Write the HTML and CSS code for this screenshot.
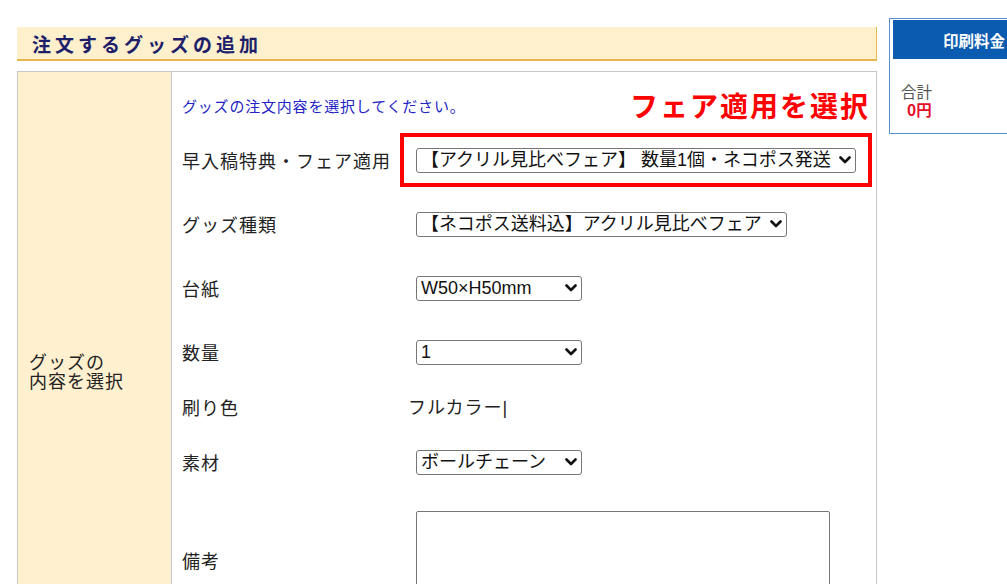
FILE: index.html
```html
<!DOCTYPE html>
<html lang="ja">
<head>
<meta charset="utf-8">
<title>注文するグッズの追加</title>
<link rel="stylesheet" href="styles.css">
</head>
<body>
<div class="page">
  <main class="main">
    <div class="section-head">
      <h2 class="section-title">注文するグッズの追加</h2>
    </div>
    <div class="order-table">
      <div class="side-cell">
        <p class="side-label">グッズの<br>内容を選択</p>
      </div>
      <div class="form-cell">
        <div class="intro">
          <p class="intro-text">グッズの注文内容を選択してください。</p>
          <p class="callout">フェア適用を選択</p>
        </div>
        <div class="form-row">
          <span class="label">早入稿特典・フェア適用</span>
          <div class="value">
            <select class="sel sel-wide">
              <option>【アクリル見比べフェア】 数量1個・ネコポス発送</option>
            </select>
          </div>
          <div class="highlight-box"></div>
        </div>
        <div class="form-row">
          <span class="label">グッズ種類</span>
          <div class="value">
            <select class="sel sel-mid">
              <option>【ネコポス送料込】アクリル見比べフェア</option>
            </select>
          </div>
        </div>
        <div class="form-row">
          <span class="label">台紙</span>
          <div class="value">
            <select class="sel sel-narrow">
              <option>W50×H50mm</option>
            </select>
          </div>
        </div>
        <div class="form-row">
          <span class="label">数量</span>
          <div class="value">
            <select class="sel sel-narrow">
              <option>1</option>
            </select>
          </div>
        </div>
        <div class="form-row form-row-text">
          <span class="label">刷り色</span>
          <div class="value"><span class="plain-value">フルカラー<span class="bar">|</span></span></div>
        </div>
        <div class="form-row">
          <span class="label">素材</span>
          <div class="value">
            <select class="sel sel-narrow">
              <option>ボールチェーン</option>
            </select>
          </div>
        </div>
        <div class="form-row form-row-note">
          <span class="label">備考</span>
          <div class="value">
            <textarea class="note"></textarea>
          </div>
        </div>
      </div>
    </div>
  </main>
  <aside class="price-panel">
    <div class="price-head">印刷料金</div>
    <div class="price-body">
      <p class="total-label">合計</p>
      <p class="total-value">0円</p>
    </div>
  </aside>
</div>
</body>
</html>
```

FILE: styles.css
```css
html, body {
  margin: 0;
  padding: 0;
  overflow: hidden;
  background: #ffffff;
}

body {
  font-family: "Noto Sans CJK JP", "Noto Sans", sans-serif;
  color: #222;
}

p, h2 {
  margin: 0;
}

.page {
  display: flex;
  align-items: flex-start;
  gap: 12px;
  padding: 18px 0 0 17px;
  width: 1200px;
}

.main {
  width: 860px;
  flex: none;
  padding-top: 9px;
}

.section-head {
  height: 32px;
  background: #fff0cd;
  border-bottom: 2px solid #e7b64e;
  border-right: 1px solid #e7b64e;
  display: flex;
  align-items: center;
  padding-left: 15px;
}

.section-title {
  font-size: 19px;
  font-weight: bold;
  letter-spacing: 4px;
  color: #1d1f6a;
  line-height: 1;
}

.order-table {
  margin-top: 10px;
  display: flex;
  border: 1px solid #c6c6c6;
  border-bottom: none;
  min-height: 540px;
}

.side-cell {
  width: 154px;
  flex: none;
  background: #fff0cf;
  border-right: 1px solid #c6c6c6;
  padding: 280px 0 0 11px;
  box-sizing: border-box;
}

.side-label {
  font-size: 18px;
  line-height: 19px;
  letter-spacing: 1px;
  color: #222;
}

.form-cell {
  flex: 1;
  padding-left: 10px;
}

.intro {
  display: flex;
  align-items: center;
  justify-content: space-between;
  height: 34px;
  padding: 16px 6px 6px 0;
}

.intro-text {
  font-size: 15px;
  letter-spacing: 0.8px;
  color: #2424c4;
}

.callout {
  font-size: 28px;
  font-weight: bold;
  letter-spacing: 2px;
  color: #ff0000;
  line-height: 34px;
}

.form-row {
  position: relative;
  display: flex;
  align-items: center;
  height: 64px;
}

.form-row-text {
  height: 46px;
}

.form-row-note {
  height: auto;
  padding-top: 17px;
}

.label {
  width: 226px;
  flex: none;
  font-size: 18px;
  letter-spacing: 1px;
  line-height: 24px;
  color: #222;
}

.value {
  display: flex;
  align-items: center;
}

.sel {
  -webkit-appearance: none;
  appearance: none;
  margin-left: 8px;
  height: 25px;
  font-family: "Liberation Sans", "Noto Sans CJK JP", sans-serif;
  font-size: 18px;
  line-height: 23px;
  color: #111;
  background-color: #fff;
  background-image: url("data:image/svg+xml,%3Csvg xmlns='http://www.w3.org/2000/svg' width='12' height='8' viewBox='0 0 12 8'%3E%3Cpath d='M1.5 1.5 L6 6 L10.5 1.5' fill='none' stroke='%23111' stroke-width='2.6' stroke-linecap='round' stroke-linejoin='round'/%3E%3C/svg%3E");
  background-repeat: no-repeat;
  background-position: right 4px center;
  background-size: 12px 8px;
  border: 1px solid #767676;
  border-radius: 3px;
  padding: 0 18px 0 4px;
  box-sizing: border-box;
}

.sel-wide {
  width: 440px;
}

.sel-mid {
  width: 371px;
}

.sel-narrow {
  width: 166px;
}

.plain-value {
  font-size: 18px;
  letter-spacing: 1px;
  line-height: 24px;
  color: #222;
}

.bar {
  font-family: "Liberation Sans", sans-serif;
  font-weight: normal;
}

.note {
  margin-left: 8px;
  width: 414px;
  height: 98px;
  box-sizing: border-box;
  border: 1px solid #767676;
  border-radius: 2px;
  resize: none;
}

.highlight-box {
  position: absolute;
  left: 218px;
  top: 5px;
  width: 472px;
  height: 54px;
  box-sizing: border-box;
  border: 4px solid #ff0000;
  pointer-events: none;
}

.price-panel {
  width: 170px;
  flex: none;
  border: 1px solid #5a90c8;
  padding: 1px 0 0 3px;
  box-sizing: border-box;
}

.price-head {
  height: 39px;
  background: #0b5cb0;
  color: #ffffff;
  font-size: 15.5px;
  font-weight: bold;
  display: flex;
  align-items: center;
  padding-left: 50px;
}

.price-body {
  padding: 23px 0 15px 8px;
}

.total-label {
  font-size: 15.5px;
  line-height: 18px;
  color: #555;
}

.total-value {
  font-size: 15.5px;
  line-height: 18px;
  font-weight: bold;
  color: #e3102c;
  padding-left: 6px;
}
```
